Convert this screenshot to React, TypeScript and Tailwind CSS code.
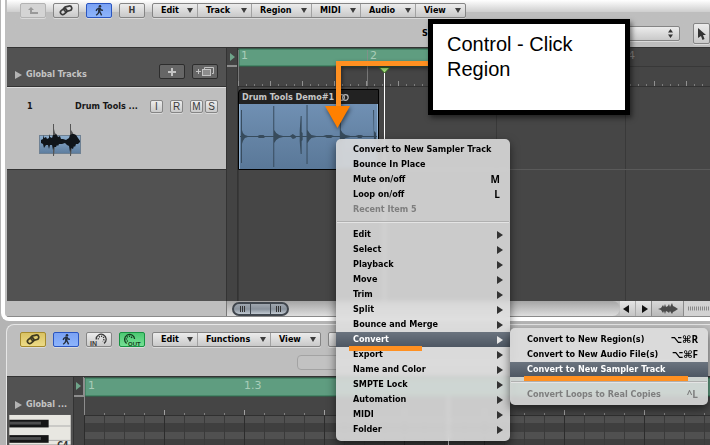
import React from "react";

const bevel =
  "rounded-[2px] border border-[#858585] bg-linear-to-b from-[#ececec] to-[#c9c9c9] text-[#3a3a3a] shadow-[0_1px_0_#dadada]";

function ToolButton({ label, tone, children }: { label: string; tone: string; children: React.ReactNode }) {
  return (
    <button type="button" aria-label={label} className={`flex h-[15px] w-[26px] items-center justify-center ${tone}`}>
      {children}
    </button>
  );
}

const blueTone = "rounded-[2px] border border-[#2a55c0] bg-linear-to-b from-[#7ba2f4] to-[#8db4fb] text-[#26303f] shadow-[0_1px_0_#dadada]";
const goldTone = "rounded-[2px] border border-[#a58a2c] bg-linear-to-b from-[#d9c262] to-[#eddb86] text-[#3f3a20] shadow-[0_1px_0_#dadada]";
const greenTone = "rounded-[2px] border border-[#179242] bg-linear-to-b from-[#4cc872] to-[#74e194] text-[#143c20] shadow-[0_1px_0_#dadada]";
const fadedTone = "rounded-[2px] border border-[#b3b3b3] bg-[#d4d4d4] text-[#999] shadow-[0_1px_0_#dadada]";

function LinkIcon() {
  return (
    <svg width="14" height="11" viewBox="0 0 14 11" fill="none" stroke="currentColor" strokeWidth="1.7">
      <rect x="4.8" y="1.4" width="8" height="4.6" rx="2.3" transform="rotate(-14 8.8 3.7)" />
      <rect x="1.2" y="4.4" width="6.8" height="4.4" rx="2.2" transform="rotate(-40 4.6 6.6)" />
    </svg>
  );
}

function WalkIcon() {
  return (
    <svg width="9" height="11" viewBox="0 0 9 11" fill="none" stroke="currentColor" strokeWidth="1.4">
      <circle cx="5" cy="1.3" r="1.3" fill="currentColor" stroke="none" />
      <path d="M4.6 2.6 L4.2 6.4" strokeWidth="2.4" />
      <path d="M4.2 6 L5.4 7.8 L6.6 10.4 M4 6 L3.2 8.4 L1.2 10.2 M4 3.2 L1.8 4.4 L1.2 6 M5 3.4 L6.2 5 L8 5.4" />
    </svg>
  );
}

function MidiIcon({ text }: { text: string }) {
  const isIn = text === "IN";
  return (
    <svg width="20" height="13" viewBox="0 0 20 13" fill="none" stroke="currentColor">
      <path d={isIn ? "M7.2 6.4A5 5 0 1 1 15 10.4" : "M4.6 10.4A5 5 0 1 1 12.6 6"} strokeWidth="1.3" />
      <path d={isIn ? "M9.4 6.4A2.8 2.8 0 1 1 13.6 8.4" : "M5.8 8.4A2.8 2.8 0 1 1 10 6"} strokeWidth="1.4" strokeDasharray="1.2 1.1" />
      <text x={isIn ? 1 : 6} y="12.5" fontSize={isIn ? 7 : 6} fontWeight="700" fill="currentColor" stroke="none" fontFamily="Liberation Sans, sans-serif">
        {text}
      </text>
    </svg>
  );
}

function MenuBar({ items }: { items: [string, string][] }) {
  return (
    <div className={`flex h-[15px] overflow-hidden ${bevel}`}>
      {items.map(([name, width], i) => (
        <button
          type="button"
          key={name}
          className={`flex items-center justify-between pr-1 pl-2 text-black ${width} ${i ? "border-l border-[#a2a2a2]" : ""}`}
        >
          {name}
          <svg width="6" height="5" viewBox="0 0 6 5"><path d="M0 0H6L3 5Z" fill="#3c3c3c" /></svg>
        </button>
      ))}
    </div>
  );
}

function range(n: number) {
  return Array.from({ length: n }, (_, i) => i);
}

function ArrangeRuler() {
  return (
    <svg width="100%" height="39" className="block shrink-0 font-['DejaVu_Sans',sans-serif] font-normal">
      <rect width="100%" height="39" fill="#454545" />
      <rect x="1" y="1" width="258" height="17" fill="#5f9d80" stroke="#2f7051" />
      <path d="M258 18.5H2000" stroke="#383838" />
      {range(200).map((i) => (
        <path key={i} d={`M${i * 8 + 0.5} ${i % 4 ? 36 : 33}V38`} stroke={i % 4 ? "#7c7c7c" : "#909090"} />
      ))}
      {range(4).map((i) => (
        <path key={i} d={`M${i * 129 + 0.5} 2V38`} stroke="#8d8d8d" strokeOpacity={i < 3 ? 0.7 : 0.2} />
      ))}
      <text x="3" y="11" fontSize="11" fill="#a9cdb9">1</text>
      <text x="132" y="11" fontSize="11" fill="#a9cdb9">2</text>
      <text x="390" y="11" fontSize="11" fill="#808080">4</text>
      <path d="M0 38.5H2000" stroke="#333" />
    </svg>
  );
}

function EditorRuler() {
  return (
    <svg width="100%" height="100%" className="block font-['DejaVu_Sans',sans-serif] font-normal">
      <rect width="100%" height="100%" fill="#454545" />
      <rect x="1" y="1" width="100%" height="18" fill="#5f9d80" stroke="#2f7051" />
      <rect y="39" width="100%" height="400" fill="#3f3f3f" />
      {range(20).map((i) => (
        <rect key={i} y={39 + i * 16} width="100%" height="7" fill="#505050" />
      ))}
      {range(80).map((i) => (
        <g key={i}>
          <path d={`M${i * 20 + 0.5} ${i % 4 ? 36 : 33}V38`} stroke={i % 4 ? "#808080" : "#a0a0a0"} />
          <path d={`M${i * 20 + 0.5} 39V400`} stroke={i % 4 ? "#3a3a3a" : "#2c2c2c"} />
        </g>
      ))}
      <path d="M0.5 1V38" stroke="#8d8d8d" />
      <path d="M0 38.5H2000" stroke="#303030" />
      <text x="4" y="12" fontSize="11" fill="#a9cdb9">1</text>
      <text x="160" y="12" fontSize="11" fill="#a9cdb9">1.3</text>
      <path d="M364.5 19V400" stroke="#eee" />
    </svg>
  );
}

function Disclosure({ children }: { children: React.ReactNode }) {
  return (
    <button type="button" className="flex items-center gap-1 text-[#c4c4c4]">
      <svg width="7" height="8" viewBox="0 0 7 8"><path d="M0 0L7 4L0 8Z" fill="#b4b4b4" /></svg>
      {children}
    </button>
  );
}

function RegionWave() {
  return (
    <svg width="100%" height="65" viewBox="0 0 140 65" preserveAspectRatio="none" className="block" fill="#374b5c">
      <path d="M0 32.5H140" stroke="#374b5c" />
      <path d="M1 6h1v20l1 3 2 2 3 1v1l-3 1-2 3-1 3v19h-1z" />
      <path d="M34 2h1v24l2 3 3 2 4 1v1l-4 1-3 2-2 3v24h-1z" />
      <path d="M61 27l1-15h1v16l1 1v7l-1 1v13h-1l-1-13z M68 1h1v25l2 3 2 2 5 1v1l-5 1-2 2-2 3v21h-1z" />
      <path d="M102 3h1v23l2 3 3 2 5 1v1l-5 1-3 2-2 3v22h-1z M136 6h1v21l2 2v8l-2 2z" />
      <path d="M18 32l2-1h4l1 1v2h-6z M51 32l3-2 3 2v2l-3 1z M85 32l3-1h5l3 1-3 2h-4z M118 32l3-1h3l2 1-2 2h-3z" />
    </svg>
  );
}

function TrackIcon() {
  return (
    <svg width="42" height="34" viewBox="0 0 42 34" className="block">
      <defs>
        <linearGradient id="trackBlue" x1="0" y1="0" x2="0" y2="1">
          <stop offset="0" stopColor="#8fb0cf" />
          <stop offset="1" stopColor="#5c7c9e" />
        </linearGradient>
      </defs>
      <rect x=".5" y="11.5" width="41" height="18" fill="url(#trackBlue)" stroke="#6f8193" />
      <path d="M14 0h1v5l1 4 2 2 1 3 1 3h-6z M31 0h1v6l2 3 1 3 2 2 1 3h-7z M14 20h2l-1 12h-1z M31 20h2l-1 12h-1z" fill="#555" />
      <path d="M2 16l2-1v-4l1 3 2-1 1 2 2-1v-4l1 3 2 1 1-3h2l1-1 2 3 2-1 1 3 2 0 3 1 3-2 1-3 2-1h2l2 1 2 3 2 3v1l-2 2-2 0-1 3-1-1-1 3-2-1-1 4-1-6-2-1-2-2-3 1-3 0-1 2-1-1-1 2-2 0-1 3-1-5-2 0-1 4-1-4-2 0-2 3-1-4-2-1z" fill="#10151a" />
    </svg>
  );
}

type Entry = { name: string; keys?: string; sub?: boolean; off?: boolean; on?: boolean } | null;

const contextEntries: Entry[] = [
  { name: "Convert to New Sampler Track" },
  { name: "Bounce In Place" },
  { name: "Mute on/off", keys: "M" },
  { name: "Loop on/off", keys: "L" },
  { name: "Recent Item 5", off: true },
  null,
  { name: "Edit", sub: true },
  { name: "Select", sub: true },
  { name: "Playback", sub: true },
  { name: "Move", sub: true },
  { name: "Trim", sub: true },
  { name: "Split", sub: true },
  { name: "Bounce and Merge", sub: true },
  { name: "Convert", sub: true, on: true },
  { name: "Export", sub: true },
  { name: "Name and Color", sub: true },
  { name: "SMPTE Lock", sub: true },
  { name: "Automation", sub: true },
  { name: "MIDI", sub: true },
  { name: "Folder", sub: true },
];

const convertEntries: Entry[] = [
  { name: "Convert to New Region(s)", keys: "⌥⌘R" },
  { name: "Convert to New Audio File(s)", keys: "⌥⌘F" },
  { name: "Convert to New Sampler Track", on: true },
  null,
  { name: "Convert Loops to Real Copies", keys: "^L", off: true },
];

function Menu({ entries, className }: { entries: Entry[]; className: string }) {
  return (
    <div role="menu" className={`absolute bg-[#dedede]/88 shadow-[0_4px_10px_rgba(0,0,0,0.55)] backdrop-blur-[2px] ${className}`}>
      {entries.map((e, i) =>
        e ? (
          <button
            type="button"
            role="menuitem"
            key={e.name}
            disabled={e.off}
            className={`flex h-[15px] w-full items-center justify-between pl-[17px] ${e.sub ? "pr-[7px]" : "pr-[10px]"} ${
              e.on ? "bg-linear-to-b from-[#6b747f] to-[#4e5763] text-white" : e.off ? "text-[#7e7e7e]" : "text-black"
            }`}
          >
            {e.name}
            {e.keys && <span className="font-['Open_Sans','DejaVu_Sans',sans-serif] text-[10px]">{e.keys}</span>}
            {e.sub && (
              <svg width="6" height="8" viewBox="0 0 6 8"><path d="M0 0L6 4L0 8Z" fill={e.on ? "#e8e8e8" : "#333"} /></svg>
            )}
          </button>
        ) : (
          <div key={i} className="flex h-[10px] items-center px-px">
            <div className="h-[2px] w-full border-t border-[#b0b0b0] bg-[#e4e4e4]" />
          </div>
        ),
      )}
    </div>
  );
}

const triRight = "M0 0L5 4L0 8Z";

export default function App() {
  return (
    <main className="relative flex h-screen flex-col overflow-hidden bg-[#b4b4b4] font-['DejaVu_Sans_Condensed','DejaVu_Sans',sans-serif] text-[9px] leading-[15px] font-bold whitespace-nowrap">
      <section className="mb-[3px] ml-px flex shrink-0 flex-col overflow-hidden rounded-bl-lg border-b-4 border-l-4 border-white bg-[#bebebe] pl-[2px]">
        <header className="flex h-12 flex-col border-b border-[#333] bg-linear-to-b from-white from-0% via-[#cfcfcf] via-25% to-[#bebebe] to-26%">
          <div className="flex shrink-0 gap-[7px] pt-[3px] pl-[13px]">
            <ToolButton label="Up one level" tone={fadedTone}>
              <svg width="10" height="8" viewBox="0 0 10 8"><path d="M3 0L6 3H4V5H10V7H2V3H0Z" fill="currentColor" /></svg>
            </ToolButton>
            <ToolButton label="Link" tone={bevel}><LinkIcon /></ToolButton>
            <ToolButton label="Catch playhead" tone={blueTone}><WalkIcon /></ToolButton>
            <ToolButton label="Hyper draw" tone={bevel}>H</ToolButton>
            <MenuBar
              items={[
                ["Edit", "w-[44px]"],
                ["Track", "w-[54px]"],
                ["Region", "w-[60px]"],
                ["MIDI", "w-[49px]"],
                ["Audio", "w-[55px]"],
                ["View", "w-[50px]"],
              ]}
            />
          </div>
          <div className="flex items-center justify-end gap-3 pt-[5px]">
            <label htmlFor="snap">Snap:</label>
            <select id="snap" className={`h-[15px] w-[220px] appearance-none ${bevel}`} defaultValue="">
              <option value=""></option>
            </select>
            <svg width="5" height="9" viewBox="0 0 5 9" className="-ml-6"><path d="M0 3.5L2.5 0L5 3.5Z M0 5.5H5L2.5 9Z" fill="#333" /></svg>
            <button type="button" aria-label="Pointer tool" className={`ml-2 flex h-[21px] w-[17px] items-center justify-center ${bevel}`}>
              <svg width="8" height="12" viewBox="0 0 8 12"><path d="M0 0L8 7H5L6.5 11L4.5 12L3 8L0 10Z" fill="#333" /></svg>
            </button>
          </div>
        </header>

        <div className="flex h-[253px]">
          <aside className="flex w-[219px] shrink-0 flex-col bg-[#525252]">
            <div className="flex h-[38px] items-start justify-between px-2 pt-4">
              <div className="pt-[3px]"><Disclosure>Global Tracks</Disclosure></div>
              <div className="flex gap-[7px]">
                <button type="button" aria-label="Add track" className="flex h-[15px] w-[26px] items-center justify-center rounded-[2px] border border-[#2d2d2d] bg-[#666]">
                  <svg width="8" height="8" viewBox="0 0 8 8"><path d="M4 0V8M0 4H8" stroke="#c4c4c4" strokeWidth="2" /></svg>
                </button>
                <button type="button" aria-label="Duplicate track" className="flex h-[15px] w-[26px] items-center justify-center rounded-[2px] border border-[#2d2d2d] bg-[#666]">
                  <svg width="18" height="9" viewBox="0 0 18 9" fill="none" stroke="#c4c4c4"><path d="M2.5 2V7M0 4.5H5M8.5 2V.5H17.5V6.5H16" /><rect x="6.5" y="2.5" width="8" height="6" fill="#8d8d8d" /></svg>
                </button>
              </div>
            </div>
            <div className="h-[84px] border-y border-[#333] bg-[#bebebe] text-[#161616] shadow-[inset_0_1px_0_#dcdcdc]">
              <div className="flex items-center pt-3 pl-5">
                <span className="w-12">1</span>
                <span className="w-[75px]">Drum Tools ...</span>
                <div className="flex font-['Liberation_Sans',sans-serif] text-[10px] font-normal">
                  {[["I", "mr-[7px]"], ["R", "mr-[7px]"], ["M", "mr-[2px]"], ["S", ""]].map(([t, m]) => (
                    <button type="button" key={t} className={`flex size-[13px] items-center justify-center ${bevel} ${m}`}>{t}</button>
                  ))}
                </div>
              </div>
              <div className="pt-[10px] pl-8"><TrackIcon /></div>
            </div>
          </aside>
          <div className="w-[12px] shrink-0 border-x border-[#333] bg-[#434343]">
            <div className="flex h-[19px] items-center justify-center border-b-2 border-[#8d8d8d]">
              <svg width="5" height="8" viewBox="0 0 5 8"><path d={triRight} fill="#6fa48a" /></svg>
            </div>
          </div>
          <div className="relative flex min-w-0 grow flex-col bg-[#464646]">
            <ArrangeRuler />
            <svg width="100%" height="214" className="absolute top-[39px] left-0">
              {range(12).map((i) => <path key={i} d={`M${i * 129 + 0.5} 0V214`} stroke="#393939" />)}
              <path d="M0 82.5H2000" stroke="#5a5a5a" />
            </svg>
            <article className="relative mt-[2px] h-[81px] w-[141px] overflow-hidden rounded-tl border border-black bg-[#222] text-[#c6c6c6]">
              <div className="flex h-[14px] items-center pl-[3px]">
                Drum Tools Demo#1
                <svg width="11" height="7" viewBox="0 0 11 7" fill="none" stroke="#bbb" strokeWidth="1.2" className="ml-1"><circle cx="3.6" cy="3.5" r="2.8" /><circle cx="7.4" cy="3.5" r="2.8" /></svg>
              </div>
              <div className="border-x border-b border-[#92b3d4] bg-linear-to-b from-[#7090b3] to-[#5a7898]"><RegionWave /></div>
            </article>
            <svg width="12" height="234" className="absolute top-[19px] left-[140px]">
              <path d="M6.5 5V234" stroke="#fff" />
              <path d="M1 .5H12L6.5 6Z" fill="#a5e07c" stroke="#356b22" />
            </svg>
          </div>
        </div>

        <footer className="flex h-[16px] border-b border-[#8a8a8a]">
          <div className="w-[220px] border-r border-[#777]" />
          <div className="flex grow items-center rounded-r-full bg-linear-to-b from-[#a5a5a5] to-[#dedede] pl-[5px]">
            <div className="flex h-[14px] w-[57px] items-center justify-between rounded-full border-2 border-[#40464d] bg-linear-to-b from-[#9fa6ae] via-[#89929c] to-[#c0c8d0] px-[6px]">
              <svg width="5" height="6"><path d="M.5 0V6M2.5 0V6M4.5 0V6" stroke="#333" /></svg>
              <div className="h-full w-[21px] border-x border-[#3c444c]" />
              <svg width="5" height="6"><path d="M.5 0V6M2.5 0V6M4.5 0V6" stroke="#333" /></svg>
            </div>
          </div>
          <div className="flex h-full w-[31px] items-center justify-around bg-linear-to-b from-[#e4e4e4] to-[#c4c4c4]">
            <svg width="6" height="8"><path d="M6 0L0 4L6 8Z" fill="#111" /></svg>
            <div className="h-full w-px bg-[#aaa]" />
            <svg width="6" height="8"><path d="M0 0L6 4L0 8Z" fill="#111" /></svg>
          </div>
          <div className="flex w-[33px] items-center justify-center border-x border-[#8a8a8a] bg-linear-to-b from-[#d8d8d8] to-[#b9b9b9]">
            <svg width="20" height="12" viewBox="0 0 20 12"><path d="M0 6L3 5L5 2L6 4L7 1L8 4L10 3L11 1L12 4L14 0L15 3L17 4L20 6L17 8L15 9L14 11L12 8L11 10L10 9L8 8L7 11L6 8L5 10L3 7Z" fill="#4a4a4a" /></svg>
          </div>
          <div className="flex w-[26px] items-center bg-[#d2d2d2] pl-1">
            <svg width="22" height="5"><path d="M0 2.5H22" stroke="#888" strokeWidth="4" strokeDasharray="1 1" /></svg>
          </div>
        </footer>
      </section>

      <section className="ml-[6px] flex min-h-0 grow flex-col overflow-hidden rounded-tl-lg border-t border-l border-[#e6e6e6] bg-[#bebebe]">
        <header className="flex h-[52px] shrink-0 flex-col border-b border-[#333]">
          <div className="flex shrink-0 gap-[7px] pt-[7px] pl-[13px]">
            <ToolButton label="Link" tone={goldTone}><LinkIcon /></ToolButton>
            <ToolButton label="Catch playhead" tone={blueTone}><WalkIcon /></ToolButton>
            <ToolButton label="MIDI in" tone={bevel}><MidiIcon text="IN" /></ToolButton>
            <ToolButton label="MIDI out" tone={greenTone}><MidiIcon text="OUT" /></ToolButton>
            <MenuBar items={[["Edit", "w-[44px]"], ["Functions", "w-[73px]"], ["View", "w-[50px]"]]} />
            <button type="button" aria-label="Tools" className={`h-[15px] w-20 ${bevel}`} />
          </div>
          <div className="mt-2 mr-9 ml-[290px] h-[15px] rounded border border-[#a3a3a3] bg-[#c2c2c2]" />
        </header>
        <div className="flex min-h-0 grow">
          <aside className="flex w-[66px] shrink-0 flex-col bg-[#525252]">
            <div className="h-[38px] pt-5 pl-2"><Disclosure>Global ...</Disclosure></div>
            <svg width="66" height="32" viewBox="0 0 66 32" className="block">
              <rect x="1" y="1" width="64" height="31" fill="#e8e7e1" />
              <path d="M1 12.5H65M1 27.5H65" stroke="#aaa" />
              <rect x="1" y="6" width="41" height="8" fill="#151515" />
              <rect x="1" y="8" width="33" height="3" fill="#4d4d4d" />
              <rect x="1" y="22" width="41" height="8" fill="#151515" />
              <rect x="1" y="24" width="33" height="3" fill="#4d4d4d" />
              <text x="51" y="35" fontSize="9" fill="#333">C4</text>
            </svg>
          </aside>
          <div className="w-[11px] shrink-0 border-l border-[#333] bg-[#434343]">
            <div className="flex h-[20px] items-center justify-center border-r border-b-2 border-[#8d8d8d]">
              <svg width="5" height="8" viewBox="0 0 5 8"><path d={triRight} fill="#6fa48a" /></svg>
            </div>
          </div>
          <div className="min-w-0 grow"><EditorRuler /></div>
        </div>
      </section>

      <svg width="110" height="70" className="absolute top-[60px] left-[324px] drop-shadow-[1px_2px_2px_rgba(0,0,0,0.5)]">
        <path d="M106 3.5H14.5V47" fill="none" stroke="#ff9021" strokeWidth="5" />
        <path d="M1 46H26L13.5 68Z" fill="#ff8000" />
      </svg>
      <div className="absolute top-[19px] left-[428px] h-24 w-[202px] border-[5px] border-black bg-white pt-2 pl-[14px] font-['Liberation_Sans',sans-serif] text-[20px] leading-[25px] font-normal text-black shadow-[2px_3px_5px_rgba(0,0,0,0.5)]">
        Control - Click
        <br />
        Region
      </div>
      <Menu entries={contextEntries} className="top-[139px] left-[336px] w-[174px] rounded-[5px] pt-[3px] pb-1" />
      <Menu entries={convertEntries} className="top-[328px] left-[510px] w-[198px] rounded-[5px] pt-1 pb-[3px]" />
      <div className="absolute top-[346px] left-[349px] h-[5px] w-[73px] bg-[#ff9021]" />
      <div className="absolute top-[376px] left-[524px] h-[5px] w-[164px] bg-[#ff9021]" />
    </main>
  );
}
